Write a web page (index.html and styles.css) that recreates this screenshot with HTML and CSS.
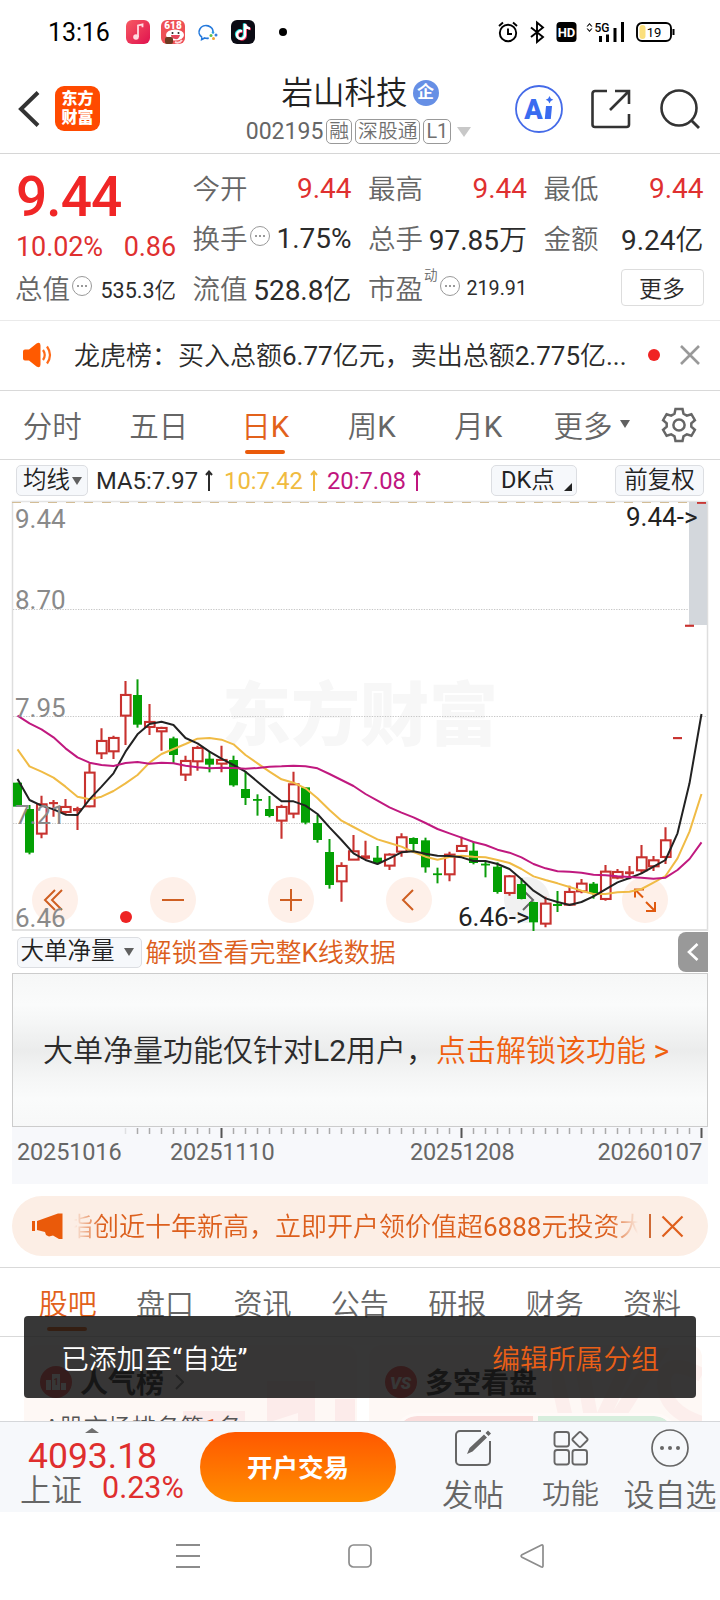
FILE: index.html
```html
<!DOCTYPE html>
<html lang="zh-CN">
<head>
<meta charset="utf-8">
<title>岩山科技 002195</title>
<link rel="stylesheet" href="styles.css">
</head>
<body>
<main class="screen">

<div class="status">
  <span class="clock">13:16</span>
  <svg class="apps" width="170" height="24" viewBox="0 0 170 24">
    <defs><linearGradient id="music" x1="0" y1="0" x2="1" y2="1"><stop offset="0" stop-color="#f75a62"/><stop offset="1" stop-color="#e0124f"/></linearGradient></defs>
    <rect width="24" height="24" rx="6" fill="url(#music)"/>
    <path d="M12 17V5.500l4.500-1.200v3" fill="none" stroke="#ffd9de" stroke-width="1.800"/><circle cx="10" cy="17" r="2.800" fill="#ffd9de"/>
    <g transform="translate(35 0)">
      <rect width="24" height="24" rx="6" fill="#ee5055"/>
      <text x="12" y="9" class="promo618">618</text>
      <ellipse cx="14" cy="15" rx="9" ry="5.500" fill="#fff"/><path d="M10 15h9q-1 5-5 4t-4-4z" fill="#e4475c"/><circle cx="11.500" cy="13" r="1" fill="#222"/><circle cx="17.500" cy="13" r="1" fill="#222"/>
      <rect x="4" y="17" width="8" height="7" rx="2" fill="#6d3b22"/><path d="M14 22q4 2 7-2" stroke="#ffd8dd" stroke-width="2" fill="none"/>
    </g>
    <path d="M76 17.300a7 6.500 0 1 1 11-4.300M76 17.300l-.3 2.200 3-1.500q2 .6 4 .2" fill="none" stroke="#2479dc" stroke-width="1.700"/>
    <circle cx="87" cy="12.500" r="1.300" fill="#2a9be0"/><circle cx="90" cy="15" r="1.500" fill="#3c7fdb"/><circle cx="85" cy="15.500" r="1.500" fill="#62c04a"/><circle cx="87.500" cy="18.500" r="1.500" fill="#f4a531"/>
    <g transform="translate(105 0)">
      <rect width="24" height="24" rx="6" fill="#0b0b14"/>
      <g fill="none" stroke-width="2.400"><path d="M11 11a4 4 0 1 0 3 4V4q1 4 5 4.500" stroke="#25e3e0" transform="translate(-1 -.6)"/><path d="M11 11a4 4 0 1 0 3 4V4q1 4 5 4.500" stroke="#f5305c" transform="translate(.8 .6)"/><path d="M11 11a4 4 0 1 0 3 4V4q1 4 5 4.500" stroke="#fff"/></g>
    </g>
    <circle cx="157" cy="12" r="4" fill="#000"/>
  </svg>
  <svg class="signals" width="178" height="24" viewBox="0 0 178 24">
    <g fill="none" stroke="#000" stroke-width="1.900">
      <circle cx="10" cy="13" r="8.200"/><path d="M10 8.500V14h4M1 6l4-3.500M19 6l-4-3.500"/>
      <path d="M33 7.500l12 9.500-6 5V2.500l6 5L33 17"/>
      <rect x="139" y="3" width="34" height="18" rx="5"/>
      <path d="M175.500 9v6" stroke-width="2"/>
    </g>
    <rect x="141.500" y="5" width="6" height="14" rx="3" fill="#fbdf7c"/>
    <text x="156" y="16.500" class="battery-text">19</text>
    <rect x="58.500" y="2" width="20" height="20" rx="3.500"/>
    <text x="68.500" y="17" class="hd-text">HD</text>
    <path d="M91.500 3l3 3.500h-1.300l-1.700-1.900-1.700 1.900h-1.300zM91.500 12l3-3.500h-1.300l-1.700 1.900-1.700-1.900h-1.300z"/>
    <text x="104" y="12" class="net-text">5G</text>
    <path d="M101 16h3v6h-3zM108 14.500h3V22h-3zM115.500 8h3v14h-3zM123 2h3v20h-3z"/>
  </svg>
</div>

<header class="header">
  <div class="header-left">
    <svg width="22" height="38" viewBox="0 0 22 38"><path d="M20 2.500L3 19l17 16.500" fill="none" stroke="#333" stroke-width="4"/></svg>
    <div class="logo"><span>东方</span><span>财富</span></div>
  </div>
  <div class="header-title">
    <div class="name">岩山科技<span class="corp">企</span></div>
    <div class="code"><span>002195</span><span class="tag">融</span><span class="tag">深股通</span><span class="tag">L1</span><i class="tri-down"></i></div>
  </div>
  <div class="header-actions">
    <svg width="48" height="48" viewBox="0 0 48 48"><circle cx="24" cy="24" r="23" fill="none" stroke="#456be8" stroke-width="1.800"/><text x="18.500" y="33.500" class="ai-text">A</text><path d="M31 21h6l-1.200 13h-6z" fill="#3a6cf0"/><path d="M34.500 11l1.300 2.500 2.500 1.300-2.500 1.300-1.300 2.500-1.300-2.500-2.500-1.300 2.500-1.300z" fill="#3a6cf0"/></svg>
    <svg width="40" height="40" viewBox="0 0 40 40"><path d="M16 2H4a2.500 2.500 0 0 0-2.500 2.500v31A2.500 2.500 0 0 0 4 38h31.500a2.500 2.500 0 0 0 2.500-2.500V25M24 2h14v13M38 2L19 21" fill="none" stroke="#333" stroke-width="2.600"/></svg>
    <svg width="42" height="42" viewBox="0 0 42 42"><circle cx="20" cy="20" r="17.500" fill="none" stroke="#333" stroke-width="2.600"/><path d="M32 32l8 8" stroke="#333" stroke-width="2.800"/></svg>
  </div>
</header>

<section class="quote">
  <div class="price">9.44</div>
  <div class="cell"><span class="k">今开</span><b class="up">9.44</b></div>
  <div class="cell"><span class="k">最高</span><b class="up">9.44</b></div>
  <div class="cell"><span class="k">最低</span><b class="up">9.44</b></div>
  <div class="cell change"><b class="up">10.02%</b><b class="up">0.86</b></div>
  <div class="cell"><span class="k">换手</span><i class="more-dot"></i><b>1.75%</b></div>
  <div class="cell"><span class="k">总手</span><b>97.85万</b></div>
  <div class="cell"><span class="k">金额</span><b>9.24亿</b></div>
  <div class="cell"><span class="k">总值</span><i class="more-dot"></i><b class="small">535.3亿</b></div>
  <div class="cell"><span class="k">流值</span><b>528.8亿</b></div>
  <div class="cell"><span class="k">市盈</span><sup>动</sup><i class="more-dot"></i><b class="small pe">219.91</b></div>
  <div class="cell"><button class="more-btn">更多</button></div>
</section>

<section class="news">
  <svg width="30" height="26" viewBox="0 0 30 26"><path d="M1 9.500Q1 7.500 3 7.500h4L14.500 1.500Q18.500-.5 18.500 3.500v19q0 4-4 2L7 18.500H3q-2 0-2-2z" fill="#ff5a00"/><path d="M21 8q3.500 5 0 10M25 4.500q6 8.500 0 17" fill="none" stroke="#ff6a1a" stroke-width="2.200"/></svg>
  <span class="news-text">龙虎榜：买入总额6.77亿元，卖出总额2.775亿...</span>
  <i class="red-dot"></i>
  <svg width="20" height="20" viewBox="0 0 20 20"><path d="M1 1l18 18M19 1L1 19" stroke="#999" stroke-width="2.600"/></svg>
</section>

<nav class="periods">
  <span>分时</span><span>五日</span><span class="active">日K</span><span>周K</span><span>月K</span>
  <span class="more">更多<i class="tri-down dark"></i></span>
  <svg width="36" height="36" viewBox="-18 -18 36 36"><path d="M-3.500-16h7l1 4.800 3.300 1.900 4.600-1.500 3.500 6L12.300-1.600v3.200l3.600 3.200-3.500 6-4.600-1.500-3.300 1.900-1 4.800h-7l-1-4.800-3.300-1.900-4.600 1.500-3.500-6 3.600-3.200v-3.200l-3.600-3.200 3.500-6 4.600 1.500 3.300-1.900z" fill="none" stroke="#666" stroke-width="2.500"/><circle r="5.600" fill="none" stroke="#666" stroke-width="2.500"/></svg>
</nav>

<section class="ma">
  <span class="pill">均线<i class="tri-down dark"></i></span>
  <span class="ma5">MA5:7.97<svg width="8" height="22" viewBox="0 0 8 22"><path d="M4 1v20M1 5l3-3.500L7 5" fill="none" stroke="currentColor" stroke-width="2"/></svg></span>
  <span class="ma10">10:7.42<svg width="8" height="22" viewBox="0 0 8 22"><path d="M4 1v20M1 5l3-3.500L7 5" fill="none" stroke="currentColor" stroke-width="2"/></svg></span>
  <span class="ma20">20:7.08<svg width="8" height="22" viewBox="0 0 8 22"><path d="M4 1v20M1 5l3-3.500L7 5" fill="none" stroke="currentColor" stroke-width="2"/></svg></span>
  <span class="pill dk">DK点<i class="corner"></i></span>
  <span class="pill right">前复权</span>
</section>

<svg class="chart" width="720" height="432" viewBox="0 500 720 432">
  <text x="222" y="740" class="watermark" textLength="276">东方财富</text>
  <g stroke="#c6c6c6" stroke-width="1" stroke-dasharray="1.300 1.300"><path d="M13 609.500H707M13 716.500H707M13 823.500H707"/></g>
  <path d="M12.500 501V930.500M707.500 501V930.500" stroke="#dedede" stroke-width="1.500"/>
  <path d="M12 930H708" stroke="#e2e2e2" stroke-width="2"/>
  <path d="M12 501.500H708" stroke="#e4e4e4" stroke-width="1.500"/>
  <path d="M12 502.500H689" stroke="#d3bd96" stroke-dasharray="9 9"/>
  <rect x="689" y="502" width="18" height="123" fill="#d3d7dc"/>
  <g>
    <circle cx="55" cy="900" r="23" fill="#fef0e9"/><circle cx="173" cy="900" r="23" fill="#fef0e9"/><circle cx="291" cy="900" r="23" fill="#fef0e9"/><circle cx="409" cy="900" r="23" fill="#fef0e9"/><circle cx="527" cy="900" r="23" fill="#f1f1f1"/><circle cx="645" cy="900" r="23" fill="#fef0e9"/>
  </g>
  <g fill="none" stroke="#cf5f22" stroke-width="2">
    <path d="M55 890l-10 10 10 10M62 890l-10 10 10 10M413 890l-10 10 10 10"/>
    <path d="M162 900h22M280 900h22M291 889v22"/>
    <path d="M635 897.500V889.500h9M635 889.500l8 8M655 902v9h-9M655 911l-9-9" stroke="#e05a10" stroke-width="2"/>
    <path d="M523 890l10 10-10 10" stroke="#666"/>
  </g>
  <g id="candles"></g>
  <g id="averages"></g>
  <circle cx="126" cy="917" r="6" fill="#ee2323"/>
  <g class="axis"><text x="15" y="528">9.44</text><text x="15" y="609">8.70</text><text x="15" y="717">7.95</text><text x="15" y="824">7.21</text><text x="15" y="927">6.46</text></g>
  <g class="mark"><text x="626" y="526">9.44-&gt;</text><text x="458" y="925.500">6.46-&gt;</text></g>
</svg>

<section class="indicator">
  <span class="pill">大单净量<i class="tri-down dark"></i></span>
  <span class="unlock">解锁查看完整K线数据</span>
  <span class="drawer"><svg width="14" height="20" viewBox="0 0 14 20"><path d="M11.500 2L3 10l8.500 8" fill="none" stroke="#fff" stroke-width="2.600"/></svg></span>
</section>

<section class="l2">大单净量功能仅针对L2用户，<span>点击解锁该功能 &gt;</span></section>

<section class="dates">
  <svg width="696" height="12" viewBox="12 1127 696 12" id="ticks"></svg>
  <div class="date-row"><span>20251016</span><span>20251110</span><span>20251208</span><span>20260107</span></div>
</section>

<section class="promo">
  <svg width="31" height="26" viewBox="0 0 31 26"><path d="M0 8h3v10H0zM5 8l21-7.500h4.500v25.500H27l-6-3.500-4 1-3-1.500-1-3-8-2z" fill="#ea5a0a"/></svg>
  <div class="promo-text"><span>指创近十年新高，立即开户领价值超6888元投资大</span></div>
  <i class="bar"></i>
  <svg width="23" height="23" viewBox="0 0 23 23"><path d="M1.500 1.500l20 20M21.500 1.500l-20 20" stroke="#df5f1c" stroke-width="2.200"/></svg>
</section>

<nav class="sections">
  <span class="active">股吧</span><span>盘口</span><span>资讯</span><span>公告</span><span>研报</span><span>财务</span><span>资料</span>
</nav>

<section class="cards">
  <div class="card">
    <div class="card-head"><svg width="32" height="32" viewBox="0 0 32 32"><circle cx="16" cy="16" r="16" fill="#f04a4a"/><path d="M6 14h5v10H6zM12 8h8v16h-8zM21 17h5v7h-5z" fill="#fff"/><text x="16" y="19" class="rank">1</text></svg><b>人气榜</b><svg width="9" height="16" viewBox="0 0 9 16"><path d="M1 1l7 7-7 7" fill="none" stroke="#777" stroke-width="2"/></svg></div>
    <p>A股市场排名第<em>1</em>名</p>
    <svg class="deco" width="180" height="50" viewBox="0 0 180 50"><path d="M8 30h62v20H8zM92 0h48v50H92zM160 18h20v32h-20z" fill="#fcebea"/><path d="M98 40l25-8v18h-25z" fill="#fff6f4"/></svg>
  </div>
  <div class="card">
    <div class="card-head"><svg width="32" height="32" viewBox="0 0 32 32"><circle cx="16" cy="16" r="16" fill="#f04a4a"/><text x="15.500" y="22.500" class="vs">VS</text></svg><b>多空看盘</b></div>
    <div class="split"><i></i><i></i></div>
    <svg class="deco vsdeco" width="150" height="78" viewBox="0 0 150 78"><path d="M0 10h28l12 68H15zM80 10h25L62 78H48zM150 30q-38-20-38 8t38 40" fill="none" stroke="#fceeec" stroke-width="14"/></svg>
  </div>
</section>

<footer class="bottom">
  <div class="index"><i class="tri-up"></i><div class="idx-value">4093.18</div><div class="idx-row"><span>上证</span><b>0.23%</b></div></div>
  <button class="trade">开户交易</button>
  <div class="act post"><svg width="38" height="38" viewBox="0 0 38 38"><path d="M27 2H6a4 4 0 0 0-4 4v26a4 4 0 0 0 4 4h26a4 4 0 0 0 4-4V12" fill="none" stroke="#666" stroke-width="2"/><path d="M13 25l2.500-6L30 5.500l3 3L18.500 22.500zM31.500 4L34 1.500l3 3L34.500 7z" fill="#666"/></svg><span>发帖</span></div>
  <div class="act func"><svg width="36" height="38" viewBox="0 0 36 38"><g fill="none" stroke="#666" stroke-width="1.900"><rect x="1.500" y="3" width="14.500" height="14.500" rx="2.500"/><rect x="1.500" y="21" width="14.500" height="14.500" rx="2.500"/><rect x="19.500" y="21" width="14.500" height="14.500" rx="2.500"/><rect x="-5.800" y="-5.800" width="11.600" height="11.600" rx="1.800" transform="translate(27 10.500) rotate(45)"/></g></svg><span>功能</span></div>
  <div class="act fav"><svg width="38" height="38" viewBox="0 0 38 38"><circle cx="19" cy="19" r="18" fill="none" stroke="#666" stroke-width="1.700"/><g fill="#666"><circle cx="11" cy="19" r="2"/><circle cx="19" cy="19" r="2"/><circle cx="27" cy="19" r="2"/></g></svg><span>设自选</span></div>
</footer>

<div class="sysnav">
  <svg width="24" height="26" viewBox="0 0 24 26"><path d="M0 2h24M0 13h24M0 24h24" stroke="#8c8c8c" stroke-width="1.800"/></svg>
  <svg width="24" height="26" viewBox="0 0 24 26"><rect x="1" y="2" width="22" height="22" rx="4.500" fill="none" stroke="#8c8c8c" stroke-width="1.700"/></svg>
  <svg width="24" height="26" viewBox="0 0 24 26"><path d="M21 2.200q2-.8 2 1v19.600q0 1.800-2 1L2 14.300q-1.800-1.300 0-2.600z" fill="none" stroke="#8c8c8c" stroke-width="1.700"/></svg>
</div>

<div class="toast"><span>已添加至“自选”</span><a>编辑所属分组</a></div>
</main>
<script src="chart.js"></script>
</body>
</html>
```
FILE: styles.css
```css
* { box-sizing: border-box; }
body { margin: 0; background: #fff; font-family: Roboto, "Noto Sans CJK SC DemiLight", "Noto Sans CJK SC", sans-serif; color: #2b2b2b; }
b, i, em { font-style: normal; font-weight: 400; }
button { font-family: inherit; padding: 0; }
svg { display: block; flex: none; }
svg text { font-family: Roboto, "Noto Sans CJK SC", sans-serif; }
.screen { position: relative; width: 720px; height: 1600px; overflow: hidden; white-space: nowrap; display: flex; flex-direction: column; }
.screen > * { flex: none; }
.logo, .corp, .card-head b, .trade { font-family: Roboto, "Noto Sans CJK SC", sans-serif; }

.status { height: 64px; display: flex; align-items: center; padding: 0 44.500px 0 48px; color: #000; }
.clock { width: 78px; font-size: 25px; letter-spacing: -.1px; }
.signals { margin-left: auto; }
.promo618 { font-size: 10px; font-weight: 900; fill: #fff; text-anchor: middle; }
.battery-text { font-size: 13px; text-anchor: middle; }
.hd-text { font-size: 13px; font-weight: 700; fill: #fff; text-anchor: middle; }
.net-text { font-size: 12px; font-weight: 500; text-anchor: middle; }

.header { height: 90px; border-bottom: 1px solid #d6d6d6; display: grid; grid-template-columns: 240px 240px 240px; }
.header-left { display: flex; align-items: center; gap: 15px; padding-left: 18px; }
.logo { width: 45px; height: 45px; border-radius: 9px; background: #ff4a00; color: #fff; font-size: 16px; font-weight: 900; line-height: 19px; padding-top: 3px; display: flex; flex-direction: column; align-items: center; }
.header-title { display: flex; flex-direction: column; align-items: center; padding-top: 7px; }
.name { display: flex; align-items: center; gap: 5px; height: 42px; font-size: 31.500px; line-height: 38px; color: #222; padding-top: 4px; }
.corp { width: 26px; height: 26px; border-radius: 50%; background: #668fe5; color: #fff; font-size: 17px; font-weight: 700; line-height: 25px; text-align: center; margin-top: -2px; }
.code { display: flex; align-items: center; height: 37px; gap: 3px; font-size: 23px; color: #666; padding-right: 3px; }
.tag { border: 1px solid #999; border-radius: 5px; height: 25px; line-height: 23px; font-size: 19.800px; padding: 0 2px; color: #707070; }
.tri-down { width: 0; border: 7px solid transparent; border-top: 10px solid #c8c8c8; border-bottom: 0; }
.code .tri-down { margin-left: 3px; }
.tri-down.dark { border-width: 8px 5px 0; border-top-color: #606060; }
.header-actions { display: flex; align-items: center; gap: 28px; padding-left: 35px; }
.ai-text { font-size: 27px; font-weight: 900; fill: #3a6cf0; text-anchor: middle; }

.quote { height: 167px; border-bottom: 1px solid #eaeaea; padding: 9px 16px 0; display: grid; grid-template-columns: 160px 158px 158px 159px; column-gap: 17.500px; grid-template-rows: 50px 50px 50px; }
.price { font-size: 55px; font-weight: 500; line-height: 68px; letter-spacing: -.9px; color: #f02626; }
.cell { display: flex; align-items: center; font-size: 28px; }
.cell b { margin-left: auto; }
.cell .k { font-size: 27.500px; color: #666; margin-left: -1px; padding-bottom: 3px; }
.cell .small { font-size: 21.500px; }
.cell .pe { font-size: 19.700px; }
.up { color: #df3030; }
.change { font-size: 27px; letter-spacing: -.1px; padding-top: 17px; }
.change b:first-child { margin-left: 0; }
.more-dot { flex: none; width: 20px; height: 20px; border: 1.500px solid #999; border-radius: 50%; margin: -5px 0 0 2px; display: flex; align-items: center; justify-content: center; }
.more-dot::before { content: ""; width: 2px; height: 2px; border-radius: 1px; background: #777; box-shadow: -4px 0 #777, 4px 0 #777; }
sup { font-size: 13.500px; line-height: 14px; color: #666; align-self: flex-start; margin: 5px 0 0 1px; vertical-align: 0; }
.more-btn { margin-left: auto; width: 83px; height: 37px; border: 1px solid #ddd; border-radius: 4px; background: #fff; font-size: 23px; color: #2b2b2b; padding-bottom: 4px; margin-top: -2px; }

.news { height: 70px; border-bottom: 1px solid #d9d9d9; display: flex; align-items: center; padding-left: 22px; padding-bottom: 1px; }
.news-text { margin-left: 22px; width: 556px; font-size: 26px; padding-bottom: 3px; }
.red-dot { width: 12px; height: 12px; border-radius: 50%; background: #f02323; margin: 0 20px 0 18px; }

.periods { height: 69px; border-bottom: 1px solid #d9d9d9; display: grid; grid-template-columns: 106.500px 106.500px 106.500px 106.500px 106.500px 118px 1fr; align-items: center; font-size: 29.500px; color: #666; }
.periods span { height: 68px; display: flex; align-items: center; justify-content: center; position: relative; padding: 0 2px 2px 0; }
.periods .active::after, .sections .active::after { content: ""; position: absolute; width: 40px; height: 4px; border-radius: 2px; background: #ea5a0a; left: calc(50% - 21px); bottom: 5px; }
.active { color: #e2611b; }
.periods .more { gap: 7px; padding-right: 0; }
.periods svg { margin-left: 10px; }

.ma { height: 41px; display: flex; align-items: center; padding: 0 16px 0 16px; font-size: 23.800px; }
.pill { height: 31px; border: 1px solid #dcdee2; border-radius: 5px; background: #f6f8fb; display: inline-flex; align-items: center; font-size: 23.500px; line-height: 27px; color: #222; position: relative; padding-bottom: 1px; }
.pill .tri-down { margin-top: 1px; }
.ma .pill:first-child { width: 72px; padding-left: 6px; gap: 2px; }
.ma > span:not(.pill) { display: flex; align-items: center; gap: 7px; }
.ma5 { margin-left: 8px; }
.ma10 { margin-left: 11px; color: #f0bb40; }
.ma20 { margin-left: 9px; color: #c0147e; }
.dk { width: 86px; margin-left: auto; padding-left: 9px; }
.corner { position: absolute; right: 4px; bottom: 4px; border: 4px solid transparent; border-right-color: #222; border-bottom-color: #222; }
.ma .right { width: 89px; margin-left: 38px; justify-content: center; }

.chart { margin-top: -1px; }
.chart .watermark { font-size: 69px; font-weight: 900; fill: #f7f7f7; }
.axis { font-size: 26px; fill: #8a8a8a; }
.mark { font-size: 26px; fill: #222; }

.indicator { height: 41px; display: flex; align-items: center; padding: 0 12px 0 16.500px; }
.indicator .pill { width: 125px; padding-left: 3px; gap: 9px; margin-top: -1px; }
.unlock { margin-left: 4px; font-size: 26px; color: #dc5f1d; padding-bottom: 4px; }
.drawer { margin: -2px 0 0 auto; width: 30px; height: 40px; border-radius: 8px 0 0 8px; background: #999; display: flex; align-items: center; justify-content: center; }

.l2 { margin: 0 12px; height: 154px; border: 1px solid #ccc; display: flex; align-items: center; padding: 0 0 4px 30px; font-size: 30px; background: linear-gradient(#f6f7f7, #fafbfb 20%, #f5f6f6 32%, #ebecec 50%, #f5f6f6 68%, #fafbfb 82%, #f7f8f8); }
.l2 span { color: #f0600f; }

.dates { margin: 0 12px; height: 57px; background: #f7f8fb; }
.date-row { display: grid; grid-template-columns: 153px 240px 187.500px 1fr; padding-left: 5px; font-size: 23.500px; line-height: 26px; color: #666; letter-spacing: -.15px; }

.promo { margin: 12px 12px 0; height: 60px; border-radius: 30px; background: #fceee5; display: flex; align-items: center; padding-left: 20px; }
.promo-text { margin-left: 11px; width: 564px; overflow: hidden; font-size: 26px; padding-bottom: 3px; color: #dc5f1d; -webkit-mask-image: linear-gradient(90deg, transparent, #000 5%, #000 95%, transparent); mask-image: linear-gradient(90deg, transparent, #000 5%, #000 95%, transparent); }
.promo-text span { margin-left: -7px; }
.bar { width: 1.500px; height: 24px; background: #cf6a35; margin: 0 10px 0 11px; }

.sections { margin-top: 11px; height: 70px; border-top: 1px solid #d9d9d9; border-bottom: 1px solid #d9d9d9; display: grid; grid-template-columns: repeat(7, 97.400px); padding-left: 19px; font-size: 29px; color: #666; }
.sections span { display: flex; align-items: center; justify-content: center; position: relative; padding-bottom: 1px; }
.sections .active::after { bottom: 5px; }

.cards { height: 84px; padding: 8px 18px 0 24px; display: flex; gap: 12px; overflow: hidden; background: #fff; }
.card { width: 333px; height: 120px; flex: none; border-radius: 12px; background: #fef8f5; padding: 20px 16px 0; position: relative; overflow: hidden; }
.card-head { height: 34px; display: flex; align-items: center; gap: 8px; color: #222; }
.card-head b { font-size: 28px; font-weight: 700; padding-bottom: 3px; }
.card-head b + svg { margin-left: 3px; }
.rank { font-size: 9px; font-weight: 700; fill: #f04a4a; text-anchor: middle; }
.vs { font-size: 17px; font-weight: 900; font-style: italic; fill: #fff; text-anchor: middle; }
.card p { margin: 13px 0 0 4px; font-size: 24px; line-height: 32px; color: #555; }
.card em { color: #e2511b; font-weight: 700; }
.deco { position: absolute; left: 151px; top: 36px; z-index: 0; }
.vsdeco { left: 183px; top: 0; }
.card-head, .card p, .split { position: relative; z-index: 1; }
.split { margin: 17px 12px 0; height: 20px; display: flex; gap: 5px; outline: 3px solid #fffaf8; border-radius: 20px 20px 0 0; }
.split i { flex: 1; background: #fadddc; border-radius: 20px 0 0 0; }
.split i + i { background: #d7eedd; border-radius: 0 20px 0 0; }

.bottom { height: 91px; border-top: 1px solid #d5d7da; background: #f6f8fb; display: flex; }
.bottom > * { flex: none; }
.index { width: 200px; position: relative; padding-top: 12px; }
.tri-up { position: absolute; left: 85px; top: 6px; border: 7px solid transparent; border-bottom: 5px solid #707070; border-top: 0; }
.idx-value { padding-left: 28px; font-size: 35.500px; line-height: 44px; color: #df2e2e; }
.idx-row { display: flex; align-items: center; gap: 20px; height: 18px; padding-left: 20px; font-size: 31px; color: #666; }
.idx-row b { color: #df2e2e; font-size: 30.500px; padding-top: 1px; }
.trade { margin-top: 10px; width: 196px; height: 70px; border: 0; border-radius: 35px; background: linear-gradient(#ff5800, #ff8e00); color: #fff; font-size: 25.500px; font-weight: 700; padding-bottom: 4px; }
.act { display: flex; flex-direction: column; align-items: center; gap: 6px; padding-top: 7px; font-size: 31px; line-height: 45px; color: #666; }
.act span { height: 38px; }
.post { width: 154px; }
.func { width: 41px; font-size: 28.500px; }
.func span { line-height: 43px; }
.fav { width: 158px; }

.sysnav { height: 87px; display: flex; align-items: center; justify-content: center; gap: 148px; }

.toast { position: absolute; left: 24px; top: 1316px; width: 672px; height: 82px; border-radius: 4px; background: rgba(20, 20, 20, .85); display: flex; align-items: center; justify-content: space-between; padding: 0 37px 1px; color: #fff; font-size: 27.800px; z-index: 5; }
.toast a { color: #ea5f17; }
```
FILE: chart.js
```js
// Vertical values are thirds of a pixel below y = 640.
const Y = v => 640 + v / 3;
const X = i => 17.5 + 12 * i;
const candles = `G 428 428 500 500|G 495 507 638 643|R 467 492 580 595|R 480 487 491 530|R 477 500 515 522|R 500 505 512 570|R 370 397 498 502|R 265 302 339 357|R 287 293 333 357|R 123 164 226 315|G 118 165 254 263|R 192 245 260 285|R 260 263 273 332|G 290 295 345 370|R 347 362 403 423|R 317 323 363 392|G 335 356 374 397|R 317 359 370 397|G 347 360 436 440|G 393 447 474 495|G 463 477 482 527|G 468 507 528 532|R 494 500 541 596|R 395 432 520 535|G 442 442 548 553|G 525 549 600 608|G 597 636 735 746|R 667 677 723 785|R 585 633 658 660|R 602 647 655 657|G 618 653 669 673|R 640 643 676 690|R 580 591 634 650|G 592 594 612 635|G 593 601 682 698|G 683 700 704 730|R 635 643 702 724|R 590 617 632 635|G 605 632 669 673|G 665 671 676 712|G 667 680 756 761|R 705 708 758 767|G 715 732 777 778|G 785 786 847 873|R 770 790 850 862|G 753 792 798 816|R 737 755 793 795|R 717 730 753 760|G 726 731 762 776|R 675 694 776 782|R 687 695 712 718|R 678 695 701 718|R 615 651 690 700|R 648 660 678 693|R 562 600 650 672|R 292 292 296 296|R -45 -45 -41 -41|R -413 -413 -410 -410`.split('|').map(s => s.split(' '));

let out = '';
candles.forEach(([kind, ...values], i) => {
  const [h, t, b, l] = values.map(v => Y(+v));
  const x = X(i);
  if (kind === 'G') {
    out += `<path d="M${x} ${h}V${l}" stroke="#0a9d0a" stroke-width="2"/><rect x="${x - 4.5}" y="${t}" width="9" height="${Math.max(b - t, 1.8)}" fill="#04a004"/>`;
  } else {
    out += `<path d="M${x} ${h}V${t}M${x} ${b}V${l}" stroke="#c8322f" stroke-width="2.1"/>`;
    out += b - t < 3
      ? `<rect x="${x - 4.5}" y="${t - .3}" width="9" height="${b - t + .8}" fill="#c8322f"/>`
      : `<rect x="${x - 4.5}" y="${t + .3}" width="9.6" height="${b - t}" fill="#fff" stroke="#c8322f" stroke-width="2.1"/>`;
  }
});
document.getElementById('candles').innerHTML = out;

const averages = [
  ['#f0bb45', '328 379 395 413 440 470 478 470 453 430 405 368 342 327 312 296 294 299 313 345 370 395 418 428 445 475 510 542 561 580 598 609 620 636 650 659 651 647 650 652 660 669 687 709 720 730 741 752 762 762 757 755 747 728 708 655 575 462'],
  ['#222', '417 480 497 508 524 525 478 440 400 335 283 252 245 255 294 310 335 356 375 395 425 455 484 484 497 522 562 600 640 660 672 655 637 634 641 647 648 652 663 663 672 687 718 752 775 786 795 786 769 748 727 714 700 680 660 580 430 222'],
  ['#c0197f', '227 250 268 292 325 352 368 375 378 369 366 371 368 370 377 382 385 383 384 386 384 380 379 377 379 385 402 420 438 462 482 502 518 532 549 567 580 593 606 615 629 638 652 672 685 694 695 698 704 706 709 711 713 716 713 690 657 607']
];
document.getElementById('averages').innerHTML = averages.map(([color, ys]) =>
  `<polyline fill="none" stroke="${color}" stroke-width="2" stroke-linejoin="round" points="${ys.split(' ').map((v, i) => X(i) + ',' + Y(+v)).join(' ')}"/>`).join('');

let ticks = '';
for (let i = 9; i <= 57; i++) {
  const x = X(i);
  const major = i === 17 || i === 37 || i === 57;
  ticks += `<path d="M${x} 1128v${major ? 10 : 6}" stroke="${major ? '#555' : '#aaa'}" stroke-width="${major ? 2 : 1.5}" opacity="${i === 9 ? .3 : 1}"/>`;
}
document.getElementById('ticks').innerHTML = ticks;
```
